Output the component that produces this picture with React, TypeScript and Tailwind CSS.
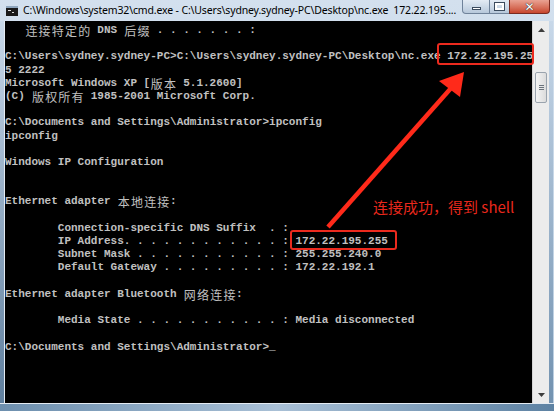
import React from "react";

const lines: string[] = [
  "   连接特定的 DNS 后缀 . . . . . . . :",
  "",
  "C:\\Users\\sydney.sydney-PC>C:\\Users\\sydney.sydney-PC\\Desktop\\nc.exe 172.22.195.25",
  "5 2222",
  "Microsoft Windows XP [版本 5.1.2600]",
  "(C) 版权所有 1985-2001 Microsoft Corp.",
  "",
  "C:\\Documents and Settings\\Administrator>ipconfig",
  "ipconfig",
  "",
  "Windows IP Configuration",
  "",
  "",
  "Ethernet adapter 本地连接:",
  "",
  "        Connection-specific DNS Suffix  . :",
  "        IP Address. . . . . . . . . . . . : 172.22.195.255",
  "        Subnet Mask . . . . . . . . . . . : 255.255.240.0",
  "        Default Gateway . . . . . . . . . : 172.22.192.1",
  "",
  "Ethernet adapter Bluetooth 网络连接:",
  "",
  "        Media State . . . . . . . . . . . : Media disconnected",
  "",
  "C:\\Documents and Settings\\Administrator>_",
];

const isCjk = (ch: string) => /[\u3000-\u9fff\uff00-\uffef]/.test(ch);

function TermLine({ text }: { text: string }) {
  // wide chars take two cells, like the console does
  const parts: React.ReactNode[] = [];
  let run = "";
  text.split("").forEach((ch, i) => {
    if (isCjk(ch)) {
      if (run) {
        parts.push(run);
        run = "";
      }
      parts.push(
        <span
          key={i}
          className="inline-block w-[13.2px] text-center align-top font-normal text-[12px] [font-family:'Noto_Sans_CJK_SC',sans-serif]"
        >
          {ch}
        </span>
      );
    } else {
      run += ch;
    }
  });
  if (run) parts.push(run);
  return <div className="h-[13.2px] whitespace-pre leading-[13.2px]">{parts}</div>;
}

function CmdIcon() {
  return (
    <svg width="12" height="10" viewBox="0 0 12 10">
      <rect x="0" y="0" width="12" height="10" fill="#1a1a1a" />
      <rect x="0" y="0" width="12" height="2" fill="#8fa6bd" />
      <rect x="2" y="4" width="3" height="1" fill="#e0e0e0" />
      <rect x="6" y="6" width="2" height="1" fill="#e0e0e0" />
    </svg>
  );
}

export default function App() {
  return (
    <div className="relative flex h-[411px] w-[554px] flex-col overflow-hidden bg-gradient-to-b from-[#d3e0ee] to-[#b9cde0]">
      {/* title bar */}
      <div className="flex h-[21px] items-start">
        <div className="flex h-[21px] shrink-0 items-center pl-[6px] pr-[5px]">
          <CmdIcon />
        </div>
        <div className="flex h-[21px] min-w-0 items-center whitespace-pre text-[10.5px] tracking-[-0.15px] text-black [font-family:'Noto_Sans',sans-serif]">
          C:\Windows\system32\cmd.exe - C:\Users\sydney.sydney-PC\Desktop\nc.exe  172.22.195....
        </div>
        <div className="ml-auto mr-[4px] flex h-[14px] shrink-0">
          <div className="flex w-[28px] items-center justify-center rounded-bl-[4px] border border-t-0 border-[#6f829a] bg-gradient-to-b from-[#e3ebf4] to-[#b7c8db]">
            <div className="mt-[4px] h-[3px] w-[9px] border border-[#3b4b5e] bg-white" />
          </div>
          <div className="flex w-[19px] items-center justify-center border-b border-[#6f829a] bg-gradient-to-b from-[#e3ebf4] to-[#b7c8db]">
            <div className="h-[7px] w-[9px] border-2 border-white outline outline-1 outline-[#3b4b5e]" />
          </div>
          <div className="flex w-[41px] items-center justify-center rounded-br-[4px] border border-t-0 border-[#7a2a20] bg-gradient-to-b from-[#e9a293] to-[#c7452d] text-[12px] font-bold text-white [font-family:'DejaVu_Sans',sans-serif] [text-shadow:0_0_1px_#222,0_0_1px_#222]">
            ✕
          </div>
        </div>
      </div>

      {/* body */}
      <div className="flex h-[382px]">
        <div className="w-[4px] bg-gradient-to-b from-[#c8d8e9] to-[#5f7f9e]" />
        <div className="w-[528px] border-l border-[#e4ebf2] bg-black pt-[3px] text-[11px] font-bold text-[#c0c0c0] [font-family:'Liberation_Mono',monospace]">
          {lines.map((l, i) => (
            <TermLine key={i} text={l} />
          ))}
        </div>
        <div className="flex w-[17px] flex-col border-l border-[#d6d6d6] bg-[#ececec]">
          <div className="flex h-[17px] items-center justify-center">
            <svg width="7" height="4" viewBox="0 0 7 4">
              <path d="M0 4 L3.5 0 L7 4 Z" fill="#3c3c3c" />
            </svg>
          </div>
          <div className="flex flex-1 flex-col items-center pt-[34px]">
            <div className="flex h-[31px] w-[12px] flex-col items-center justify-center gap-[1px] rounded-[2px] border border-[#9aa3ad] bg-gradient-to-r from-[#f4f4f4] to-[#dcdcdc]">
              <div className="h-px w-[5px] bg-[#6b737c]" />
              <div className="h-px w-[5px] bg-[#6b737c]" />
              <div className="h-px w-[5px] bg-[#6b737c]" />
            </div>
          </div>
          <div className="flex h-[17px] items-center justify-center">
            <svg width="7" height="4" viewBox="0 0 7 4">
              <path d="M0 0 L7 0 L3.5 4 Z" fill="#3c3c3c" />
            </svg>
          </div>
        </div>
        <div className="w-[4px] bg-gradient-to-b from-[#c8d8e9] to-[#7292b0]" />
      </div>

      {/* bottom frame */}
      <div className="h-[8px] border-t border-[#e4ebf2] bg-gradient-to-r from-[#6d8fae] via-[#a9c0d6] to-[#5d82a3]" />

      {/* annotations */}
      <div className="absolute left-[437px] top-[43px] h-[22px] w-[97px] rounded-[3px] border-2 border-[#ec2a1e]" />
      <div className="absolute left-[290px] top-[230px] h-[20px] w-[107px] rounded-[3px] border-2 border-[#ec2a1e]" />
      <div className="absolute left-[373px] top-[196px] whitespace-pre text-[15px] leading-[22px] text-[#e8281c] [font-family:'Noto_Sans_CJK_SC',sans-serif]">
        连接成功，得到 shell
      </div>
      <svg className="absolute left-0 top-0" width="554" height="411" viewBox="0 0 554 411">
        <line x1="328" y1="227" x2="452" y2="87" stroke="#ff2a1a" strokeWidth="4.5" />
        <polygon points="464,72 439,81 460,97" fill="#ff2a1a" />
      </svg>
    </div>
  );
}
